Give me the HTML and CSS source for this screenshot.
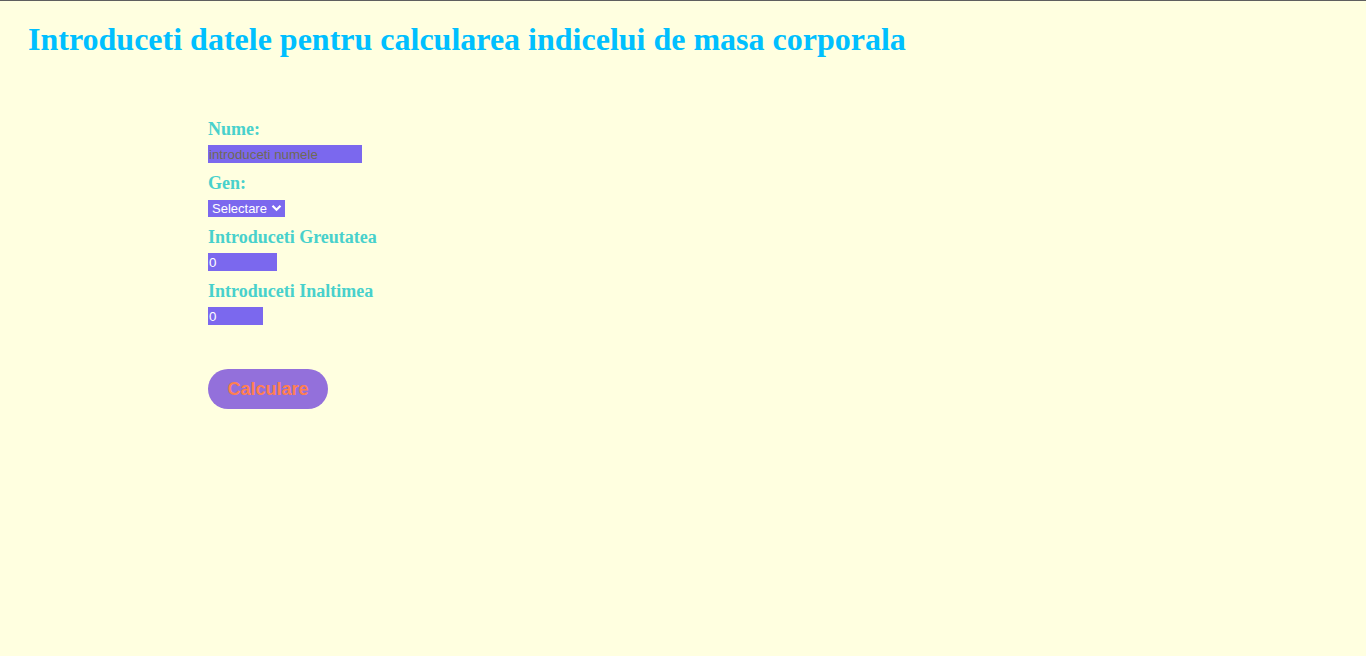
FILE: index.html
```html
<!DOCTYPE html>
<html lang="ro">
<head>
<meta charset="utf-8">
<title>IMC</title>
<link rel="stylesheet" href="styles.css">
</head>
<body>
<div class="page">
  <h1 class="title">Introduceti datele pentru calcularea indicelui de masa corporala</h1>
  <form class="form">
    <label class="lbl" for="nume">Nume:</label>
    <input class="field f-nume" id="nume" type="text" placeholder="introduceti numele">
    <label class="lbl" for="gen">Gen:</label>
    <span class="sel-wrap">
      <select class="sel" id="gen">
        <option>Selectare</option>
        <option>Masculin</option>
        <option>Feminin</option>
      </select>
      <svg class="chev" width="11" height="8" viewBox="0 0 11 8"><path d="M1.5 1.8 L5.5 5.8 L9.5 1.8" fill="none" stroke="#fff" stroke-width="2.2"/></svg>
    </span>
    <label class="lbl" for="greutate">Introduceti Greutatea</label>
    <input class="field f-g" id="greutate" type="text" value="0">
    <label class="lbl" for="inaltime">Introduceti Inaltimea</label>
    <input class="field f-i" id="inaltime" type="text" value="0">
    <button class="btn" type="button">Calculare</button>
  </form>
</div>
</body>
</html>
```
FILE: styles.css
```css
html, body {
  margin: 0;
  padding: 0;
  background: #FFFFE0;
}
.page {
  border-top: 1px solid #5f5f5f;
  min-height: 655px;
  padding: 0 28px;
  font-family: "Liberation Serif", serif;
}
.title {
  margin: 20px 0 0 0;
  font-size: 32px;
  font-weight: bold;
  color: #00BFFF;
  line-height: 37px;
}
.form {
  display: flex;
  flex-direction: column;
  align-items: flex-start;
  margin: 61px 0 0 180px;
}
.lbl {
  display: block;
  font-family: "Liberation Serif", serif;
  font-weight: bold;
  font-size: 18px;
  line-height: 20px;
  color: #48D1CC;
  margin-bottom: 6px;
}
.field {
  box-sizing: border-box;
  height: 18px;
  border: none;
  padding: 0 1px;
  margin: 0 0 10px 0;
  background: #7B68EE;
  color: #fff;
  font-family: "Liberation Sans", Arial, sans-serif;
  font-size: 13.33px;
  outline: none;
}
.field::placeholder {
  color: #6f6a55;
}
.f-nume { width: 154px; }
.f-g { width: 69px; }
.f-i { width: 55px; }
.sel-wrap {
  position: relative;
  display: block;
  width: 77px;
  height: 17px;
  margin-bottom: 11px;
}
.sel {
  appearance: none;
  -webkit-appearance: none;
  box-sizing: border-box;
  width: 77px;
  height: 17px;
  border: none;
  border-radius: 0;
  padding: 0 0 0 4px;
  margin: 0;
  background: #7B68EE;
  color: #fff;
  font-family: "Liberation Sans", Arial, sans-serif;
  font-size: 13px;
  line-height: 17px;
  outline: none;
}
.chev {
  position: absolute;
  right: 3px;
  top: 5px;
  pointer-events: none;
}
.btn {
  margin-top: 34px;
  width: 120px;
  height: 40px;
  border: none;
  border-radius: 20px;
  background: #9370DB;
  color: #FF7F50;
  font-family: "Liberation Sans", Arial, sans-serif;
  font-weight: bold;
  font-size: 18px;
  padding: 0;
  cursor: pointer;
}
```
